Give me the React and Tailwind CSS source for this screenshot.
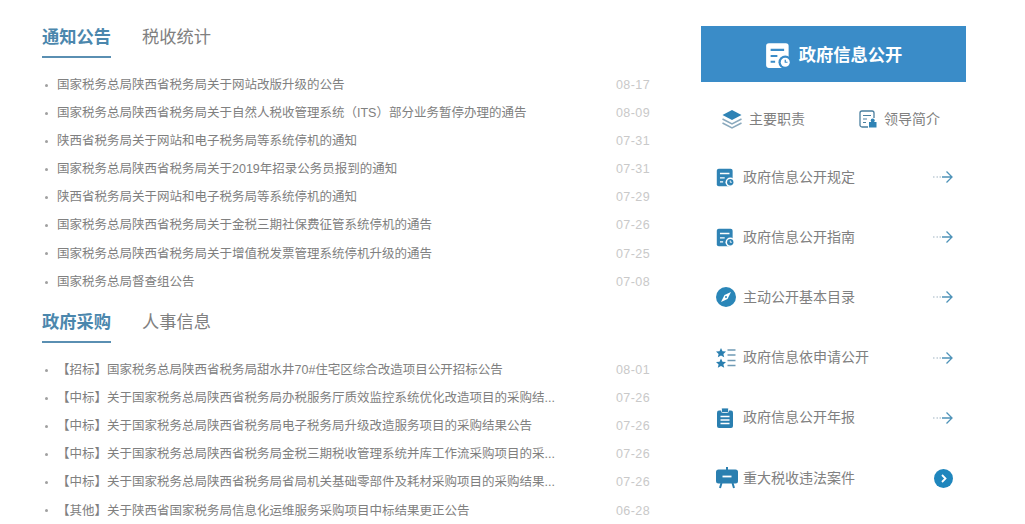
import React from "react";

const notices = [
  ["国家税务总局陕西省税务局关于网站改版升级的公告", "08-17"],
  ["国家税务总局陕西省税务局关于自然人税收管理系统（ITS）部分业务暂停办理的通告", "08-09"],
  ["陕西省税务局关于网站和电子税务局等系统停机的通知", "07-31"],
  ["国家税务总局陕西省税务局关于2019年招录公务员报到的通知", "07-31"],
  ["陕西省税务局关于网站和电子税务局等系统停机的通知", "07-29"],
  ["国家税务总局陕西省税务局关于金税三期社保费征管系统停机的通告", "07-26"],
  ["国家税务总局陕西省税务局关于增值税发票管理系统停机升级的通告", "07-25"],
  ["国家税务总局督查组公告", "07-08"],
];

const purchases = [
  ["【招标】国家税务总局陕西省税务局甜水井70#住宅区综合改造项目公开招标公告", "08-01"],
  ["【中标】关于国家税务总局陕西省税务局办税服务厅质效监控系统优化改造项目的采购结...", "07-26"],
  ["【中标】关于国家税务总局陕西省税务局电子税务局升级改造服务项目的采购结果公告", "07-26"],
  ["【中标】关于国家税务总局陕西省税务局金税三期税收管理系统并库工作流采购项目的采...", "07-26"],
  ["【中标】关于国家税务总局陕西省税务局省局机关基础零部件及耗材采购项目的采购结果...", "07-26"],
  ["【其他】关于陕西省国家税务局信息化运维服务采购项目中标结果更正公告", "06-28"],
];

function DocIcon({ size = 24, bg = "#2f83b5", fg = "#fff" }) {
  return (
    <svg width={size} height={size} viewBox="0 0 24 24" className="shrink-0">
      <rect x="1" y="1" width="20" height="22" rx="2.5" fill={bg} />
      <path d="M5 7h12M5 12.5h6M5 17.5h4" stroke={fg} strokeWidth="1.8" />
      <circle cx="18" cy="18" r="6" fill={fg} />
      <circle cx="18" cy="18" r="4" fill={bg} />
      <path d="M18 15.8V18h2" stroke={fg} strokeWidth="1.1" fill="none" />
    </svg>
  );
}

function LayersIcon() {
  return (
    <svg width="22" height="20" viewBox="0 0 22 20" className="shrink-0">
      <path d="M11 1l9.5 5L11 11 1.500 6z" fill="#2f83b5" />
      <path d="M1.500 10l9.500 5 9.500-5M1.500 14l9.500 5 9.500-5" stroke="#8aa9bd" strokeWidth="1.500" fill="none" />
    </svg>
  );
}

function LeaderIcon() {
  return (
    <svg width="18" height="18" viewBox="0 0 18 18" className="shrink-0">
      <path d="M9 17H3a2 2 0 0 1-2-2V3a2 2 0 0 1 2-2h10a2 2 0 0 1 2 2v5" stroke="#4a7f9f" strokeWidth="1.300" fill="none" />
      <path d="M4 5.500h8M4 9h4M4 12.500h3" stroke="#4a7f9f" strokeWidth="1.200" />
      <rect x="10" y="12" width="7.500" height="5.500" fill="#2f83b5" />
      <circle cx="13.700" cy="10.500" r="2" fill="#2f83b5" />
    </svg>
  );
}

function CompassIcon() {
  return (
    <svg width="20" height="20" viewBox="0 0 20 20" className="shrink-0">
      <circle cx="10" cy="10" r="10" fill="#2a86b8" />
      <path d="M15 5l-3.500 7L5 15l3.500-7z" fill="#fff" />
      <circle cx="10" cy="10" r="1" fill="#2a86b8" />
    </svg>
  );
}

function StarListIcon() {
  return (
    <svg width="20" height="20" viewBox="0 0 20 20" className="shrink-0">
      <path d="M5 0l1.500 3.200 3.500.4-2.600 2.300.8 3.400L5 7.600 1.800 9.300l.8-3.400L0 3.600l3.500-.4z" fill="#2a7fb0" />
      <path d="M5 10.500l1.500 3.200 3.500.4-2.600 2.300.8 3.400L5 18.100l-3.200 1.700.8-3.400L0 14.100l3.500-.4z" fill="#2a7fb0" />
      <path d="M11.500 2h8M11.500 7h8M11.500 12.500h8M11.500 17.500h8" stroke="#6f9ab5" strokeWidth="1.400" />
    </svg>
  );
}

function ClipboardIcon() {
  return (
    <svg width="18" height="20" viewBox="0 0 18 20" className="shrink-0">
      <rect x="1" y="2.500" width="16" height="17.500" rx="2" fill="#2a7fb0" />
      <rect x="5.500" y="0" width="7" height="4.500" rx="1" fill="#2a7fb0" stroke="#fff" strokeWidth="0.800" />
      <path d="M4.500 8.500h9M4.500 12h9M4.500 15.500h9" stroke="#fff" strokeWidth="1.500" />
    </svg>
  );
}

function BoardIcon() {
  return (
    <svg width="22" height="22" viewBox="0 0 22 22" className="shrink-0">
      <path d="M11 0v3" stroke="#2a7fb0" strokeWidth="2" />
      <rect x="0" y="2.500" width="22" height="14" rx="2.500" fill="#2a7fb0" />
      <path d="M6.500 9.500h9" stroke="#fff" strokeWidth="1.800" />
      <path d="M5.500 16l-1.500 5M16.500 16l1.500 5" stroke="#2a7fb0" strokeWidth="2" />
    </svg>
  );
}

function ArrowIcon() {
  return (
    <svg width="20" height="14" viewBox="0 0 20 14" className="shrink-0">
      <path d="M0 7h1.500M3.500 7h1.500M6.500 7h1.500" stroke="#9fb4c2" strokeWidth="1.200" />
      <path d="M9 7h10M13.500 1.500L19 7l-5.500 5.500" stroke="#4f93b8" strokeWidth="1.300" fill="none" />
    </svg>
  );
}

function RoundArrowIcon() {
  return (
    <svg width="19" height="19" viewBox="0 0 19 19" className="shrink-0">
      <circle cx="9.500" cy="9.500" r="9.500" fill="#1f86bd" />
      <path d="M8 6l3.500 3.500L8 13" stroke="#fff" strokeWidth="1.800" fill="none" />
    </svg>
  );
}

function Tabs({ active, other }) {
  return (
    <div className="flex h-[38px] items-start">
      <div className="flex h-[38px] flex-col justify-between">
        <span className="h-[33px] text-[17.250px] leading-[35px] font-bold text-[#4b87ad]">{active}</span>
        <div className="h-[2px] w-[69px] bg-[#5a8fb2]"></div>
      </div>
      <span className="ml-[31px] h-[33px] text-[17.250px] leading-[35px] text-[#808080]">{other}</span>
    </div>
  );
}

function NewsList({ items }) {
  return (
    <ul className="flex flex-col">
      {items.map(([title, date], i) => (
        <li key={i} className="flex h-[28.150px] items-center text-[12.500px] text-[#808080]">
          <span className="mr-[9px] ml-[3px] h-[3px] w-[3px] shrink-0 rounded-full bg-[#a0a0a0]"></span>
          <span className="flex-1 whitespace-nowrap">{title}</span>
          <span className="w-[35px] text-right text-[12.500px] tracking-[0.400px] text-[#c9c9c9]">{date}</span>
        </li>
      ))}
    </ul>
  );
}

const links = [
  { icon: <DocIcon size={19} />, text: "政府信息公开规定", end: <ArrowIcon /> },
  { icon: <DocIcon size={19} />, text: "政府信息公开指南", end: <ArrowIcon /> },
  { icon: <CompassIcon />, text: "主动公开基本目录", end: <ArrowIcon /> },
  { icon: <StarListIcon />, text: "政府信息依申请公开", end: <ArrowIcon /> },
  { icon: <ClipboardIcon />, text: "政府信息公开年报", end: <ArrowIcon /> },
  { icon: <BoardIcon />, text: "重大税收违法案件", end: <RoundArrowIcon /> },
];

export default function App() {
  return (
    <div
      className="flex h-[524px] w-[1025px] overflow-hidden bg-white pl-[42px]"
      style={{ fontFamily: '"Liberation Sans", "Noto Sans CJK SC", sans-serif' }}
    >
      <div className="w-[608px] pt-[20px]">
        <Tabs active="通知公告" other="税收统计" />
        <div className="mt-[13px]">
          <NewsList items={notices} />
        </div>
        <div className="mt-[9px]">
          <Tabs active="政府采购" other="人事信息" />
        </div>
        <div className="mt-[13px]">
          <NewsList items={purchases} />
        </div>
      </div>

      <div className="ml-[51px] w-[265px] pt-[26px]">
        <div className="flex h-[56px] items-center justify-center gap-[7px] bg-[#3a8cc8] pt-[3px]">
          <DocIcon size={27} bg="#fff" fg="#3a8cc8" />
          <span className="text-[17.300px] font-bold text-white">政府信息公开</span>
        </div>
        <div className="mt-[23px] flex h-[28px] items-center pl-[20px] text-[14px] text-[#808080]">
          <LayersIcon />
          <span className="ml-[6px]">主要职责</span>
          <span className="ml-[54px]"><LeaderIcon /></span>
          <span className="ml-[7px]">领导简介</span>
        </div>
        <div className="mt-[14px] flex flex-col">
          {links.map((l) => (
            <div key={l.text} className="flex h-[60.200px] items-center pr-[13px] pl-[15px] text-[14px] text-[#808080]">
              <span className="flex w-[27px] shrink-0 items-center">{l.icon}</span>
              <span className="flex-1 whitespace-nowrap">{l.text}</span>
              {l.end}
            </div>
          ))}
        </div>
      </div>
    </div>
  );
}
